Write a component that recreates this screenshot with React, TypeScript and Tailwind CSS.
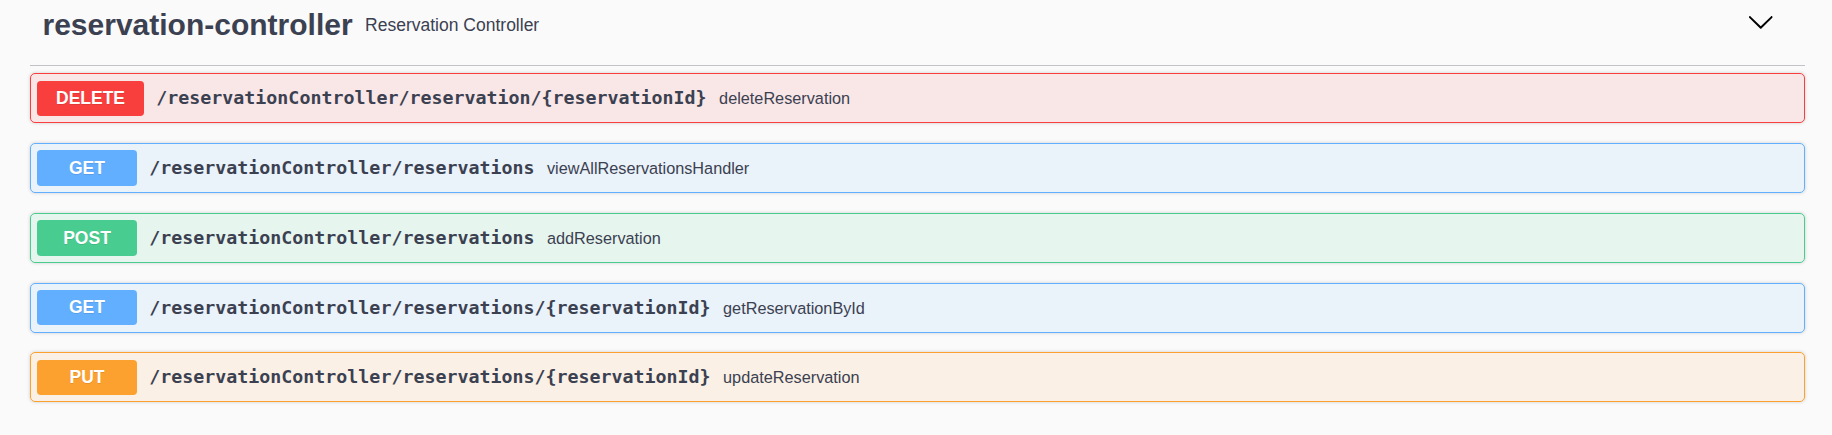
import React from "react";

type Op = {
  method: string;
  path: string;
  desc: string;
  border: string;
  bg: string;
  badge: string;
};

const ops: Op[] = [
  {
    method: "DELETE",
    path: "/reservationController/reservation/{reservationId}",
    desc: "deleteReservation",
    border: "border-[#f93e3e]",
    bg: "bg-[#f93e3e]/10",
    badge: "bg-[#f93e3e]",
  },
  {
    method: "GET",
    path: "/reservationController/reservations",
    desc: "viewAllReservationsHandler",
    border: "border-[#61affe]",
    bg: "bg-[#61affe]/10",
    badge: "bg-[#61affe]",
  },
  {
    method: "POST",
    path: "/reservationController/reservations",
    desc: "addReservation",
    border: "border-[#49cc90]",
    bg: "bg-[#49cc90]/10",
    badge: "bg-[#49cc90]",
  },
  {
    method: "GET",
    path: "/reservationController/reservations/{reservationId}",
    desc: "getReservationById",
    border: "border-[#61affe]",
    bg: "bg-[#61affe]/10",
    badge: "bg-[#61affe]",
  },
  {
    method: "PUT",
    path: "/reservationController/reservations/{reservationId}",
    desc: "updateReservation",
    border: "border-[#fca130]",
    bg: "bg-[#fca130]/10",
    badge: "bg-[#fca130]",
  },
];

function OpBlock({ op }: { op: Op }) {
  return (
    <div
      className={`flex h-[50px] items-center rounded-[5px] border ${op.border} ${op.bg} px-[6.25px] shadow-[0_0_3.75px_rgba(0,0,0,0.19)]`}
    >
      <span
        className={`min-w-[99.5px] rounded-[3.75px] ${op.badge} px-[18.75px] py-[7.5px] text-center text-[17.5px] font-bold leading-[20.5px] text-white text-shadow-[0_1.25px_0_rgba(0,0,0,0.1)]`}
      >
        {op.method}
      </span>
      <span className="px-[12.5px] font-['DejaVu_Sans_Mono',monospace] text-[18.3px] font-bold leading-[24px] text-[#3b4151]">
        {op.path}
      </span>
      <span className="text-[16.25px] leading-[20px] text-[#3b4151]">{op.desc}</span>
    </div>
  );
}

export default function App() {
  return (
    <div className="min-h-screen bg-[#fafafa] pl-[30px] pr-[27px] font-['Liberation_Sans',Arial,sans-serif] text-[#3b4151]">
      <div className="flex h-[66px] items-center border-b border-[#3b4151]/30 pb-[15px] pl-[12.5px] pr-[31px]">
        <span className="text-[30px] font-bold leading-[34.5px]">reservation-controller</span>
        <small className="flex-1 px-[12.5px] text-[17.5px] font-normal leading-[20px]">
          Reservation Controller
        </small>
        <button className="mb-[7px] flex h-[27.5px] w-[27.5px] items-center justify-center">
          <svg viewBox="0 0 20 20" className="h-[27.5px] w-[27.5px]" fill="#000">
            <path d="M17.418 6.109c.272-.268.709-.268.979 0s.271.701 0 .969l-7.908 7.83c-.27.268-.707.268-.979 0l-7.908-7.83c-.27-.268-.27-.701 0-.969.271-.268.709-.268.979 0L10 13.25l7.418-7.141z" />
          </svg>
        </button>
      </div>
      <div className="mt-[7.3px] flex flex-col gap-[19.75px]">
        {ops.map((op, i) => (
          <OpBlock key={i} op={op} />
        ))}
      </div>
    </div>
  );
}
